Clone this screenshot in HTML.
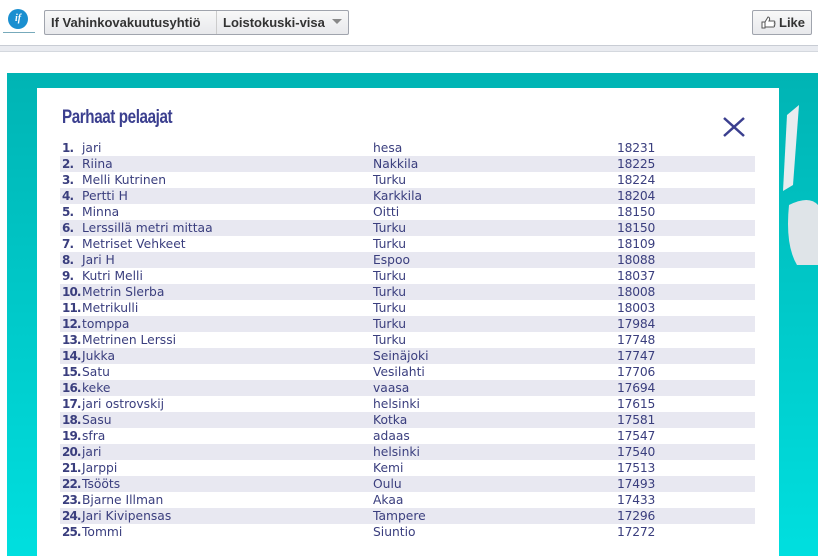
<!DOCTYPE html>
<html><head><meta charset="utf-8"><style>
*{margin:0;padding:0;box-sizing:border-box}
body{width:818px;height:556px;overflow:hidden;background:#fff;font-family:"DejaVu Sans",Verdana,sans-serif;position:relative}
.logo{position:absolute;left:8px;top:9px;width:20px;height:20px;border-radius:50%;background:#1a8fd0;color:#fff;font:italic bold 10px "Liberation Serif",serif;text-align:center;line-height:20px}
.logot{position:absolute;left:3px;top:32px;width:32px;height:1px;background:#7ab;}
.btn{position:absolute;top:10px;height:25px;border:1px solid #a0a4ad;border-radius:2px;background:linear-gradient(#f8f8f8,#e8e9ec);font:bold 13px "Liberation Sans",Arial,sans-serif;color:#333;line-height:23px}
.bar{position:absolute;left:0;top:45px;width:818px;height:7px;background:#e9ebf0;border-top:1px solid #c8ccd4;border-bottom:1px solid #d4d8de}
.teal{position:absolute;left:7px;top:73px;width:811px;height:483px;background:linear-gradient(#00b4b4,#00dfdf)}
.panel{position:absolute;left:37px;top:88px;width:742px;height:468px;background:#fff}
h1{position:absolute;left:62px;top:107px;font:bold 19px "Liberation Sans Narrow","Liberation Sans",sans-serif;color:#3b3f8f;letter-spacing:-0.5px;transform:scaleX(0.8);transform-origin:left}
.row{position:absolute;left:60px;width:695px;height:16px;font-size:12.3px;color:#3a3e7e;line-height:16px}
.row.s{background:#e8e8f1}
.row span{position:absolute;top:0}
.n{left:2px;font-weight:bold;font-size:12px;letter-spacing:-0.9px;line-height:16.5px}
.nm{left:22px}.c{left:313px}.sc{left:557px;letter-spacing:-0.2px}
</style></head><body>
<div class="logo">if</div><div class="logot"></div>
<div class="btn" style="left:44px;width:305px">
<span style="position:absolute;left:6px">If Vahinkovakuutusyhtiö</span>
<span style="position:absolute;left:171px;top:0;width:1px;height:23px;background:#ccc"></span>
<span style="position:absolute;left:178px">Loistokuski-visa</span>
<span style="position:absolute;left:287px;top:8px;border:5px solid transparent;border-top:5px solid #888;width:0;height:0"></span>
</div>
<div class="btn" style="left:752px;width:60px"><svg style="position:absolute;left:8px;top:5px" width="15" height="13"><path d="M1 6h3v6H1z M4 6l3-5c1 0 2 1 1.5 3L8 5h5c1 0 1 1 .5 1.5c.7.3.7 1.3 0 1.5c.6.4.5 1.3-.2 1.5c.4.5.2 1.4-.6 1.5H6L4 11" fill="#fff" stroke="#555" stroke-width="1"/></svg><span style="position:absolute;left:26px">Like</span></div>
<div class="bar"></div>
<div class="teal"></div>
<svg style="position:absolute;left:779px;top:95px" width="39" height="170"><path d="M8 20 L20 10 L14 90 L4 96Z" fill="#e8ecef"/><path d="M10 110 Q30 100 39 110 L39 170 L18 170 Q6 150 10 110Z" fill="#dfe4e8"/></svg>
<div class="panel"></div>
<h1>Parhaat pelaajat</h1>
<svg style="position:absolute;left:722px;top:116px" width="24" height="22"><path d="M2 2L22 20M22 2L2 20" stroke="#3b3f8f" stroke-width="2.5"/></svg>
<div class="row" style="top:140px"><span class="n">1.</span><span class="nm">jari</span><span class="c">hesa</span><span class="sc">18231</span></div>
<div class="row s" style="top:156px"><span class="n">2.</span><span class="nm">Riina</span><span class="c">Nakkila</span><span class="sc">18225</span></div>
<div class="row" style="top:172px"><span class="n">3.</span><span class="nm">Melli Kutrinen</span><span class="c">Turku</span><span class="sc">18224</span></div>
<div class="row s" style="top:188px"><span class="n">4.</span><span class="nm">Pertti H</span><span class="c">Karkkila</span><span class="sc">18204</span></div>
<div class="row" style="top:204px"><span class="n">5.</span><span class="nm">Minna</span><span class="c">Oitti</span><span class="sc">18150</span></div>
<div class="row s" style="top:220px"><span class="n">6.</span><span class="nm">Lerssillä metri mittaa</span><span class="c">Turku</span><span class="sc">18150</span></div>
<div class="row" style="top:236px"><span class="n">7.</span><span class="nm">Metriset Vehkeet</span><span class="c">Turku</span><span class="sc">18109</span></div>
<div class="row s" style="top:252px"><span class="n">8.</span><span class="nm">Jari H</span><span class="c">Espoo</span><span class="sc">18088</span></div>
<div class="row" style="top:268px"><span class="n">9.</span><span class="nm">Kutri Melli</span><span class="c">Turku</span><span class="sc">18037</span></div>
<div class="row s" style="top:284px"><span class="n">10.</span><span class="nm">Metrin Slerba</span><span class="c">Turku</span><span class="sc">18008</span></div>
<div class="row" style="top:300px"><span class="n">11.</span><span class="nm">Metrikulli</span><span class="c">Turku</span><span class="sc">18003</span></div>
<div class="row s" style="top:316px"><span class="n">12.</span><span class="nm">tomppa</span><span class="c">Turku</span><span class="sc">17984</span></div>
<div class="row" style="top:332px"><span class="n">13.</span><span class="nm">Metrinen Lerssi</span><span class="c">Turku</span><span class="sc">17748</span></div>
<div class="row s" style="top:348px"><span class="n">14.</span><span class="nm">Jukka</span><span class="c">Seinäjoki</span><span class="sc">17747</span></div>
<div class="row" style="top:364px"><span class="n">15.</span><span class="nm">Satu</span><span class="c">Vesilahti</span><span class="sc">17706</span></div>
<div class="row s" style="top:380px"><span class="n">16.</span><span class="nm">keke</span><span class="c">vaasa</span><span class="sc">17694</span></div>
<div class="row" style="top:396px"><span class="n">17.</span><span class="nm">jari ostrovskij</span><span class="c">helsinki</span><span class="sc">17615</span></div>
<div class="row s" style="top:412px"><span class="n">18.</span><span class="nm">Sasu</span><span class="c">Kotka</span><span class="sc">17581</span></div>
<div class="row" style="top:428px"><span class="n">19.</span><span class="nm">sfra</span><span class="c">adaas</span><span class="sc">17547</span></div>
<div class="row s" style="top:444px"><span class="n">20.</span><span class="nm">jari</span><span class="c">helsinki</span><span class="sc">17540</span></div>
<div class="row" style="top:460px"><span class="n">21.</span><span class="nm">Jarppi</span><span class="c">Kemi</span><span class="sc">17513</span></div>
<div class="row s" style="top:476px"><span class="n">22.</span><span class="nm">Tsööts</span><span class="c">Oulu</span><span class="sc">17493</span></div>
<div class="row" style="top:492px"><span class="n">23.</span><span class="nm">Bjarne Illman</span><span class="c">Akaa</span><span class="sc">17433</span></div>
<div class="row s" style="top:508px"><span class="n">24.</span><span class="nm">Jari Kivipensas</span><span class="c">Tampere</span><span class="sc">17296</span></div>
<div class="row" style="top:524px"><span class="n">25.</span><span class="nm">Tommi</span><span class="c">Siuntio</span><span class="sc">17272</span></div>
</body></html>
